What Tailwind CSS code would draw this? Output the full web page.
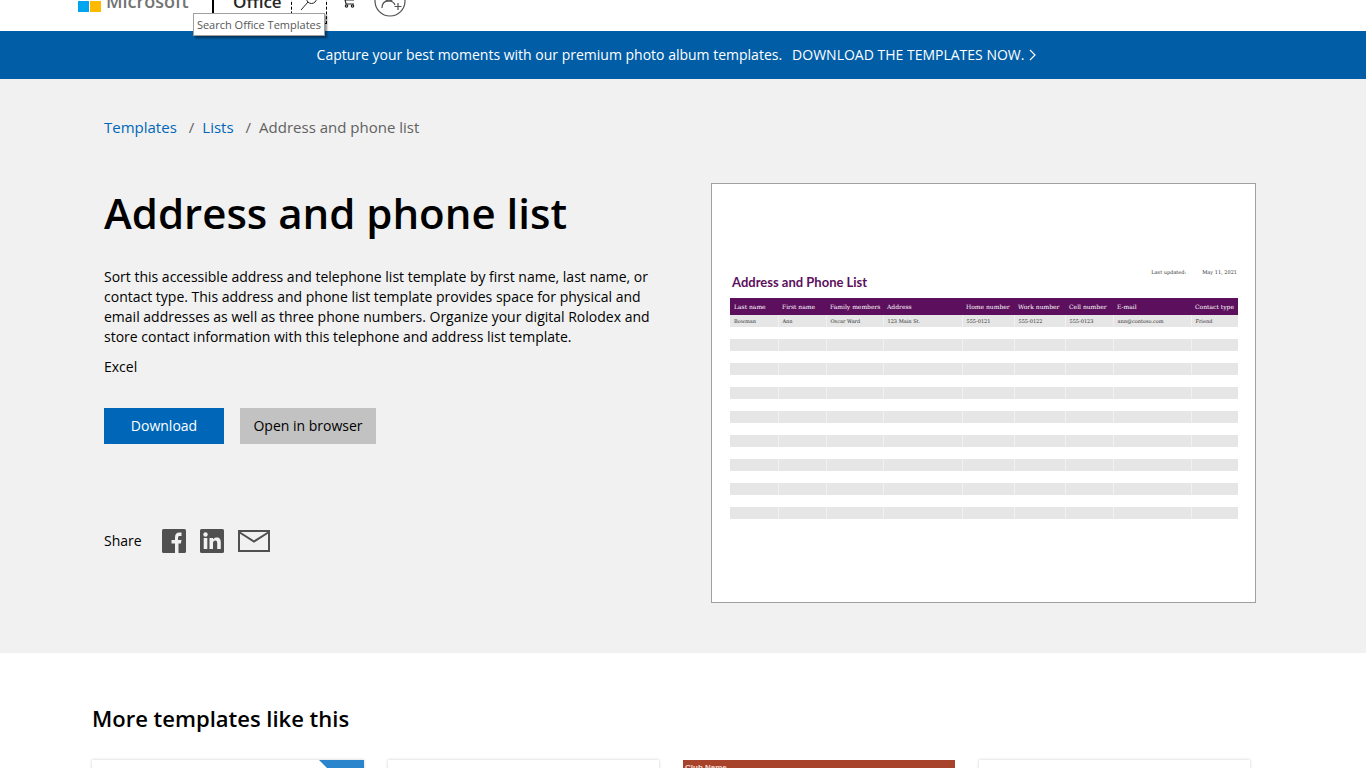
<!DOCTYPE html>
<html lang="en">
<head>
    <meta charset="UTF-8">
    <meta name="viewport" content="width=device-width, initial-scale=1.0">
    <title>Address and phone list</title>
    <script src="https://cdn.jsdelivr.net/npm/@tailwindcss/browser@4"></script>
</head>
<body class="bg-white text-black font-['Open_Sans','Noto_Sans',sans-serif] text-sm overflow-x-hidden overflow-y-hidden">
    <!-- site header, partly scrolled out of view -->
    <header class="-mt-[30px] h-[61px] pl-[78px] flex items-center bg-white">
        <a href="#" class="w-[109px] flex items-center gap-[5px] text-[#737373] font-semibold text-[18px]">
            <svg class="w-[23px] h-[23px] shrink-0" viewBox="0 0 23 23">
                <path fill="#f25022" d="M0 0h11v11H0z"/>
                <path fill="#7fba00" d="M12 0h11v11H12z"/>
                <path fill="#00a4ef" d="M0 12h11v11H0z"/>
                <path fill="#ffb900" d="M12 12h11v11H12z"/>
            </svg>
            <span class="pt-[2px]">Microsoft</span>
        </a>
        <div class="ml-[25px] w-[2px] h-[25px] bg-black"></div>
        <a href="#" class="ml-[19px] w-[49px] pt-1 text-[17px] font-semibold text-[#262626]">Office</a>
        <div class="relative ml-[9px]">
            <button aria-label="Search Office Templates" class="w-[36px] h-[46px] flex items-center justify-center border border-dashed border-black">
                <svg class="w-[18px] h-[18px]" viewBox="0 0 18 18" fill="none" stroke="#262626" stroke-width="1">
                    <circle cx="11.5" cy="6.5" r="5"/>
                    <path d="M8 10 1 18"/>
                </svg>
            </button>
            <div class="absolute right-[2px] top-[35px] z-10 h-[23px] px-[3px] whitespace-nowrap bg-white border border-[#a0a0a0] shadow-[2px_2px_2px_rgba(0,0,0,0.45)] text-[11px] leading-[21px] text-[#575757]">Search Office Templates</div>
        </div>
        <button aria-label="Cart" class="ml-[15px]">
            <svg class="w-[14px] h-[14px]" viewBox="0 0 14 14" fill="none" stroke="#262626" stroke-width="1.2">
                <path d="M0 1h2l2 9h8M3 6h9"/>
                <circle cx="4.500" cy="12" r="1.200"/>
                <circle cx="10.500" cy="12" r="1.200"/>
            </svg>
        </button>
        <button aria-label="Sign in" class="ml-[18px]">
            <svg class="w-[32px] h-[32px]" viewBox="0 0 32 32" fill="none" stroke="#505050" stroke-width="1.2">
                <circle cx="16" cy="16" r="15"/>
                <circle cx="15" cy="11" r="5"/>
                <path d="M8 23c0-9 11-9 13-3M24 18v7M20.500 21.500h7"/>
            </svg>
        </button>
    </header>

    <div class="h-12 pr-3 flex items-center justify-center gap-[10px] bg-[#005da6] text-white text-[14px]">
        <span>Capture your best moments with our premium photo album templates.</span>
        <a href="#" class="flex items-center gap-[5px]">
            DOWNLOAD THE TEMPLATES NOW.
            <svg class="w-[8px] h-[12px]" viewBox="0 0 8 12" fill="none" stroke="currentColor" stroke-width="1.2"><path d="m1 1 5 5-5 5"/></svg>
        </a>
    </div>

    <main>
        <section class="pl-[104px] pr-[110px] pt-[36px] pb-[50px] bg-[#f1f1f1]">
            <nav aria-label="Breadcrumb" class="flex text-[15px] leading-6 text-[#616161]">
                <a href="#" class="text-[#0067b8]">Templates</a>
                <span class="ml-3 mr-2">/</span>
                <a href="#" class="text-[#0067b8]">Lists</a>
                <span class="ml-3 mr-2">/</span>
                <span>Address and phone list</span>
            </nav>

            <div class="mt-[44px] flex justify-between">
                <div class="w-[560px]">
                    <h1 class="text-[42px] leading-[60px] font-semibold">Address and phone list</h1>
                    <p class="mt-[24px] text-[14px] leading-5">Sort this accessible address and telephone list template by first name, last name, or<br>contact type. This address and phone list template provides space for physical and<br>email addresses as well as three phone numbers. Organize your digital Rolodex and<br>store contact information with this telephone and address list template.</p>
                    <p class="mt-[10px] leading-5">Excel</p>
                    <div class="mt-[31px] flex gap-4">
                        <button class="w-[120px] h-9 bg-[#0067b8] text-white text-[14px]">Download</button>
                        <button class="w-[136px] h-9 bg-[#c2c2c2] text-[14px]">Open in browser</button>
                    </div>
                    <div class="mt-[85px] flex items-center">
                        <span class="w-[58px]">Share</span>
                        <a href="#" aria-label="Facebook">
                            <svg class="w-[24px] h-[24px]" viewBox="0 0 24 24">
                                <rect width="24" height="24" rx="1.5" fill="#505050"/>
                                <path fill="#f1f1f1" d="M13 24v-9.500h-3.500v-3.500H13V8.500c0-3.500 1.500-5 4.500-5h2v3.500h-1.500c-1.500 0-2 .5-2 2v2h3.500l-.6 3.500H16.500V24z"/>
                            </svg>
                        </a>
                        <a href="#" aria-label="LinkedIn" class="ml-[14px]">
                            <svg class="w-[24px] h-[24px]" viewBox="0 0 24 24">
                                <rect width="24" height="24" rx="1.5" fill="#505050"/>
                                <circle cx="5.500" cy="5.500" r="2.200" fill="#f1f1f1"/>
                                <path fill="#f1f1f1" d="M3.700 9h3.600v11H3.700zM9.500 9H13v1.600c1-1.500 2.300-2 3.800-2 3 0 4 2 4 5V20h-3.600v-6c0-1.500-.4-2.500-1.800-2.500S13 12.500 13 14v6H9.500z"/>
                            </svg>
                        </a>
                        <a href="#" aria-label="Email" class="ml-[14px]">
                            <svg class="w-[32px] h-[22px]" viewBox="0 0 32 22" fill="none" stroke="#505050" stroke-width="2">
                                <path d="M1 1h30v20H1zM1 2l15 9.500L31 2"/>
                            </svg>
                        </a>
                    </div>
                </div>

                <!-- template preview -->
                <div class="w-[545px] h-[420px] border border-[#a0a0a0] bg-white px-[18px] pt-[84px] font-['DejaVu_Serif',serif] text-[5px] text-[#333333]">
                    <div class="flex justify-end gap-4 leading-[8px]">
                        <span>Last updated:</span>
                        <span>May 11, 2021</span>
                    </div>
                    <h2 class="pl-[2px] font-['Lato',sans-serif] font-bold text-[13px] leading-[12px] text-[#5c0f5c]">Address and Phone List</h2>
                    <table class="mt-[10px] w-[508px] table-fixed border-collapse text-left leading-[8px] whitespace-nowrap">
                        <colgroup>
                            <col class="w-[48px]"><col class="w-[48px]"><col class="w-[57px]"><col class="w-[79px]"><col class="w-[52px]"><col class="w-[51px]"><col class="w-[48px]"><col class="w-[78px]"><col class="w-[47px]">
                        </colgroup>
                        <thead>
                            <tr class="h-[17px] bg-[#5c0f5c] text-white [&>th]:pl-[4px] [&>th]:font-normal text-[6px]">
                                <th>Last name</th><th>First name</th><th>Family members</th><th>Address</th><th>Home number</th><th>Work number</th><th>Cell number</th><th>E-mail</th><th>Contact type</th>
                            </tr>
                        </thead>
                        <tbody id="rows">
                            <tr class="h-[12px] bg-[#e6e6e6] [&>td]:pl-[4px] [&>td+td]:border-l [&>td]:border-[#f1f1f1]">
                                <td>Bowman</td><td>Ann</td><td>Oscar Ward</td><td>123 Main St.</td><td>555-0121</td><td>555-0122</td><td>555-0123</td><td>ann@contoso.com</td><td>Friend</td>
                            </tr>
                        </tbody>
                    </table>
                </div>
            </div>
        </section>

        <section class="pl-[92px] pr-[116px] pt-[49px]">
            <h2 class="text-[22px] leading-8 font-semibold">More templates like this</h2>
            <div class="mt-[26px] grid grid-cols-4 gap-6">
                <a href="#" aria-label="Template" class="h-[200px] bg-white shadow-[0_0_3px_rgba(0,0,0,0.2)] flex justify-end">
                    <svg class="w-[45px] h-[45px]" viewBox="0 0 45 45"><path fill="#2b85cc" d="M0 0h45v45z"/></svg>
                </a>
                <a href="#" aria-label="Template" class="h-[200px] bg-white shadow-[0_0_3px_rgba(0,0,0,0.2)]"></a>
                <a href="#" class="h-[200px] bg-[#a8432b] pl-[2px] pt-[3px] font-['Liberation_Sans',sans-serif] font-bold text-[8px] leading-[10px] text-[#f4dcd5]">Club Name</a>
                <a href="#" aria-label="Template" class="h-[200px] bg-white shadow-[0_0_3px_rgba(0,0,0,0.2)]"></a>
            </div>
        </section>
    </main>

    <script>
        // blank banded rows under the sample contact
        const rows = document.getElementById('rows');
        for (let i = 0; i < 16; i++) {
            const shade = i % 2 ? 'bg-[#e6e6e6] [&>td+td]:border-l' : 'bg-white';
            rows.innerHTML += `<tr class="h-[12px] ${shade} [&>td]:border-[#f1f1f1]">${'<td></td>'.repeat(9)}</tr>`;
        }
    </script>
</body>
</html>
